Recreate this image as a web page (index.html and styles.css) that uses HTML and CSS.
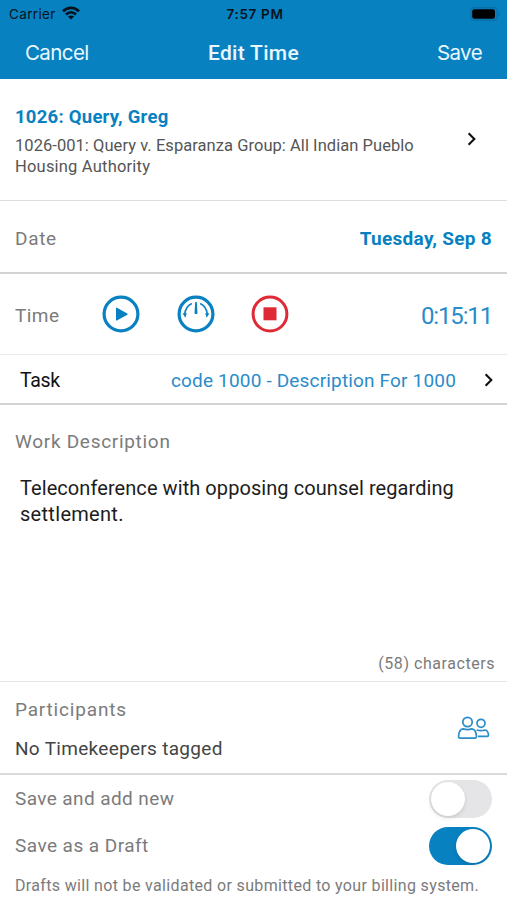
FILE: index.html
```html
<!DOCTYPE html>
<html lang="en">
<head>
<meta charset="utf-8">
<title>Edit Time</title>
<link rel="stylesheet" href="styles.css">
</head>
<body>
<header class="header">
  <div class="status">
    <div class="carrier"><span class="carrier-name">Carrier</span>
      <svg width="18" height="14" viewBox="0 0 18 14"><g fill="none" stroke="#06131c" stroke-width="2.7"><path d="M1 5.3C5.5.6 12.5.6 17 5.3"/><path d="M4 8.5c3-2.9 7-2.9 10 0"/></g><path d="M9 13.6 5.9 10.5c1.8-1.5 4.4-1.5 6.2 0z" fill="#06131c"/></svg>
    </div>
    <span class="clock">7:57 PM</span>
    <svg class="battery" width="31" height="14" viewBox="0 0 31 14"><rect x=".7" y=".7" width="26.6" height="12.6" rx="3.8" fill="#0881c1" stroke="#0870a8" stroke-width="1.4"/><rect x="2.2" y="2.2" width="22.8" height="9.6" rx="2.2" fill="#000"/><path d="M28.6 4.7c2 .9 2 3.7 0 4.6z" fill="#0870a8"/></svg>
  </div>
  <nav class="nav"><span class="nav-action cancel">Cancel</span><h1 class="title">Edit Time</h1><span class="nav-action save">Save</span></nav>
</header>
<main>
  <section class="matter">
    <div>
      <h2 class="client">1026: Query, Greg</h2>
      <p class="matter-name">1026-001: Query v. Esparanza Group: All Indian Pueblo<br><span class="matter-rest">Housing Authority</span></p>
    </div>
    <svg class="chevron" width="10" height="14" viewBox="0 0 10 14"><path d="M1.6 1.3 7.3 7l-5.7 5.7"/></svg>
  </section>
  <section class="row date"><span class="label label-date">Date</span><span class="date-value">Tuesday, Sep 8</span></section>
  <section class="row time">
    <span class="label label-time">Time</span>
    <div class="controls">
      <svg width="38" height="38" viewBox="0 0 38 38"><circle cx="19" cy="19" r="16.9" fill="none" stroke="#0881c1" stroke-width="3.2"/><path d="M14 13.2v11.8q0 .9.9.5l10.4-5.8q.8-.6 0-1.2l-10.4-5.8q-.9-.4-.9.5z" fill="#0881c1"/></svg>
      <svg width="38" height="38" viewBox="0 0 38 38"><circle cx="19" cy="19" r="16.9" fill="none" stroke="#0881c1" stroke-width="3.2"/><g fill="none" stroke="#0881c1" stroke-width="1.6"><path d="M14.8 8.4Q8.2 11.4 7.6 20"/><path d="M23.2 8.4Q29.8 11.4 30.4 20"/></g><path d="M5.6 18.3h4.2L8.3 22.8zM32.4 18.3h-4.2l1.5 4.5zM18.2 7h1.6l.7 11.2q-1.5 1.8-3 0z" fill="#0881c1"/></svg>
      <svg width="38" height="38" viewBox="0 0 38 38"><circle cx="19" cy="19" r="16.9" fill="none" stroke="#df2934" stroke-width="3"/><path d="M12.5 12.3h13v13h-13z" fill="#df2934"/></svg>
    </div>
    <span class="duration">0:15:11</span>
  </section>
  <section class="row task"><span class="task-label">Task</span><span class="task-value">code 1000 - Description For 1000</span>
    <svg class="chevron" width="10" height="14" viewBox="0 0 10 14"><path d="M1.6 1.3 7.3 7l-5.7 5.7"/></svg>
  </section>
  <section class="work">
    <div class="label label-work">Work Description</div>
    <p class="description">Teleconference with opposing counsel regarding<br><span class="description-end">settlement.</span></p>
    <div class="count">(58) characters</div>
  </section>
  <section class="participants">
    <div><div class="label label-participants">Participants</div><div class="tagged">No Timekeepers tagged</div></div>
    <svg class="people" width="34" height="24" viewBox="0 0 34 24"><g fill="none" stroke="#2a8cc9" stroke-width="1.7" stroke-linejoin="round"><circle cx="11.5" cy="6" r="4.7"/><path d="M4 22.1q-1.5 0-1.4-1.5c.1-5 1.6-7.4 4.6-7.7 2.9 1 5.7 1 8.6 0 3 .3 4.5 2.7 4.6 7.7q.1 1.5-1.4 1.5z"/><circle cx="25" cy="7.3" r="4"/><path d="M20.6 14q4.3 1.4 8.2 0c2.5.3 3.5 2 3.7 5q0 1.4-1.3 1.4h-9.3"/></g></svg>
  </section>
  <section class="options">
    <div class="option"><span class="label label-new">Save and add new</span><span class="toggle"><i class="knob"></i></span></div>
    <div class="option"><span class="label label-draft">Save as a Draft</span><span class="toggle toggle-on"><i class="knob"></i></span></div>
    <p class="note">Drafts will not be validated or submitted to your billing system.</p>
  </section>
</main>
</body>
</html>
```

FILE: styles.css
```css
* { box-sizing: border-box; }
body { margin: 0; width: 507px; height: 900px; overflow: hidden; background: #fff; font-family: Roboto, sans-serif; white-space: nowrap; }
h1, h2, p { margin: 0; }
svg { display: block; flex: none; }

.header { height: 79px; background: #0881c1; font-family: Inter, sans-serif; }
.status { height: 28px; padding: 0 6px 0 9px; display: grid; grid-template-columns: 1fr auto 1fr; align-items: center; color: #06131c; font-size: 13.5px; line-height: 28px; }
.carrier { display: flex; align-items: center; gap: 6px; margin-top: -2px; }
.carrier-name { letter-spacing: .35px; line-height: 28px; padding-top: 2px; }
.clock { font-weight: 600; font-size: 13.5px; letter-spacing: .65px; }
.battery { justify-self: end; margin-top: -1px; }
.nav { height: 50px; padding: 0 25px; display: grid; grid-template-columns: 1fr auto 1fr; align-items: center; color: #e9f7ff; line-height: 50px; }
.nav-action { font-size: 20.5px; letter-spacing: -.6px; }
.save { text-align: right; }
.title { font: 500 21px/50px Roboto, sans-serif; letter-spacing: .3px; }

.matter { height: 122px; padding: 26px 30px 0 15px; display: flex; justify-content: space-between; border-bottom: 1px solid #dedede; }
.matter .chevron { margin-top: 27px; }
.client { font-size: 18.5px; line-height: 24px; letter-spacing: .25px; color: #0881c1; }
.matter-name { margin-top: 7px; font-size: 16.5px; line-height: 20.5px; letter-spacing: .05px; color: #555; }
.matter-rest { letter-spacing: .2px; }
.chevron { fill: none; stroke: #111; stroke-width: 2.1; }

.row { display: flex; align-items: center; }
.label { font-size: 19px; line-height: 24px; color: #7b7b7b; }
.date { height: 73px; padding: 4px 15px 0; justify-content: space-between; border-bottom: 2px solid #d3d3d3; }
.label-date { letter-spacing: .7px; }
.date-value { font-size: 19px; font-weight: 700; letter-spacing: .28px; color: #0881c1; }
.time { height: 81px; padding: 0 15px 0 15px; border-bottom: 1px solid #e9e9e9; }
.label-time { width: 87px; padding-top: 3px; letter-spacing: .43px; }
.controls { display: flex; gap: 36.5px; }
.duration { margin-left: auto; padding-top: 3px; font-size: 24px; letter-spacing: -1.15px; color: #2a8cc9; }
.task { height: 50px; padding: 2px 13px 0 20px; border-bottom: 2px solid #d3d3d3; }
.task-label { font-size: 19.5px; letter-spacing: -.3px; color: #111; }
.task-value { margin: 0 28px 0 auto; font-size: 19px; letter-spacing: .17px; color: #2a8cc9; }

.work { height: 277px; padding: 25px 12px 5px 15px; display: flex; flex-direction: column; border-bottom: 1px solid #e5e5e5; }
.label-work { letter-spacing: .7px; }
.description { margin: 22px 0 0 5px; font-size: 20px; line-height: 25.5px; letter-spacing: .07px; color: #1c1c1c; }
.description-end { letter-spacing: .3px; }
.count { margin-top: auto; align-self: flex-end; font-size: 16px; line-height: 24px; letter-spacing: .55px; color: #7b7b7b; }

.participants { height: 93px; padding: 16px 17px 0 15px; display: flex; justify-content: space-between; border-bottom: 2px solid #d9d9d9; }
.label-participants { letter-spacing: .82px; }
.tagged { margin-top: 15px; font-size: 19px; line-height: 24px; letter-spacing: .3px; color: #444; }
.people { margin-top: 18px; }

.options { padding: 4px 15px 0; }
.option { height: 39px; margin-bottom: 8.5px; display: flex; align-items: center; justify-content: space-between; }
.label-new { letter-spacing: .4px; }
.label-draft { letter-spacing: .45px; }
.toggle { width: 63px; height: 38px; padding: 2px; display: flex; border-radius: 19px; background: #e5e5e7; }
.toggle-on { justify-content: flex-end; background: #0881c1; }
.knob { width: 34px; height: 34px; border-radius: 50%; background: #fff; box-shadow: 0 2px 4px rgba(0,0,0,.12); }
.note { margin-top: 4px; font-size: 16px; line-height: 24px; letter-spacing: .34px; color: #7b7b7b; }
```
